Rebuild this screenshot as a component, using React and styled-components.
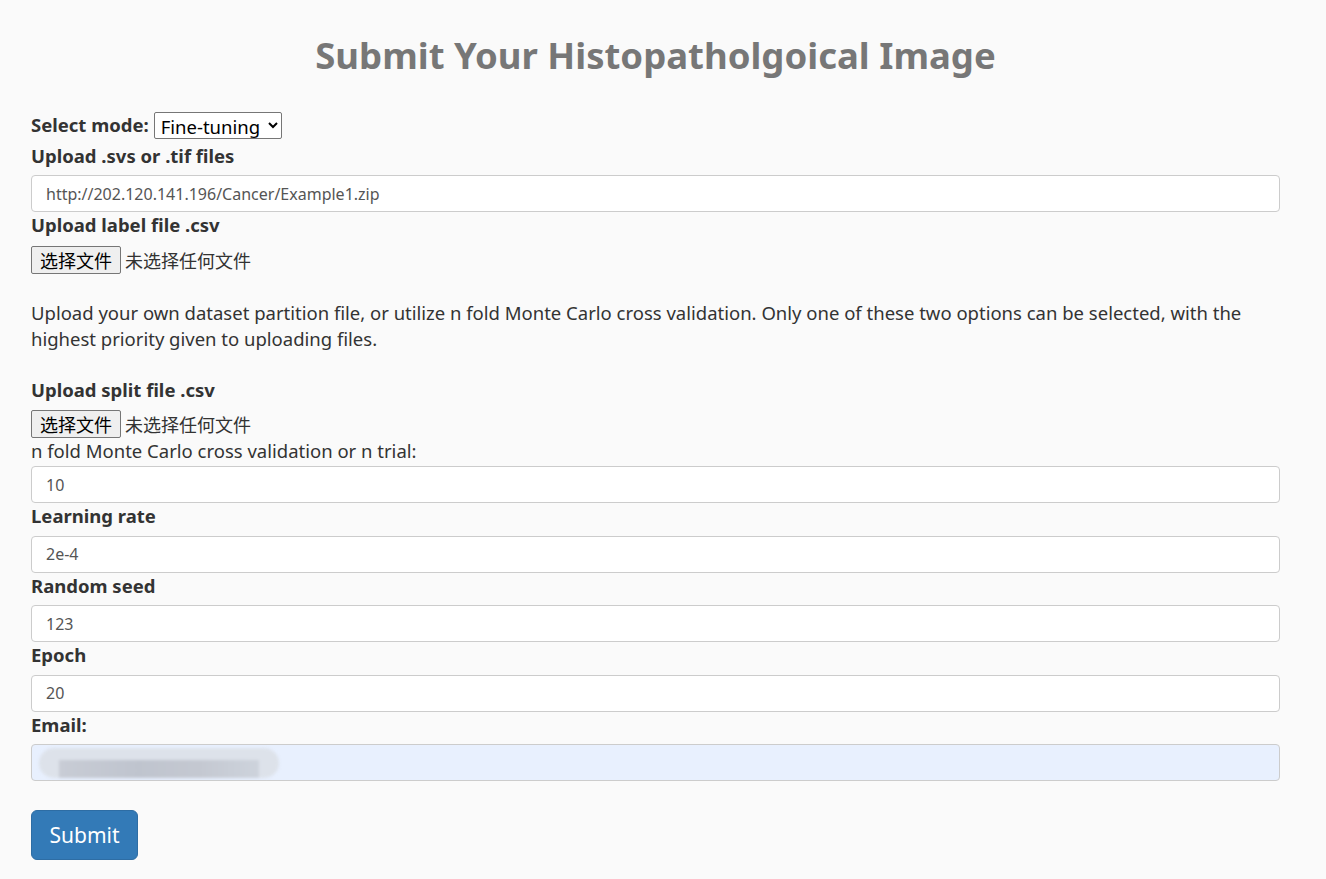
import React from 'react';
import styled, { createGlobalStyle } from 'styled-components';

const GlobalStyle = createGlobalStyle`
  html, body {
    margin: 0;
    padding: 0;
    background: #fafafa;
  }
  body {
    font-family: "Noto Sans", "Noto Sans CJK SC", sans-serif;
    color: #333;
  }
`;

const Page = styled.div`
  padding: 0 46px 20px 31px;
`;

const Title = styled.h1`
  margin: 0;
  padding: 33px 0 34px;
  text-align: center;
  font-size: 36.5px;
  line-height: 44px;
  font-weight: 700;
  color: #777;
`;

const Form = styled.form`
  display: flex;
  flex-direction: column;
`;

const Row = styled.div`
  display: flex;
  align-items: center;
  gap: 5px;
  height: 28px;
`;

const Label = styled.label`
  display: block;
  font-size: 18.5px;
  line-height: 26px;
  font-weight: ${p => (p.plain ? 400 : 700)};
  margin-top: ${p => p.top || 0}px;
  margin-bottom: ${p => p.gap || 0}px;
`;

const Select = styled.select`
  font-family: "Noto Sans", sans-serif;
  font-size: 18.5px;
  height: 27px;
  width: 128px;
  padding: 0 2px;
  border: 1px solid #767676;
  border-radius: 2px;
  background: #fff;
  color: #000;
`;

const Input = styled.input`
  box-sizing: border-box;
  display: block;
  width: 100%;
  height: 37px;
  padding: 0 14px;
  font-family: "Noto Sans", sans-serif;
  font-size: 16px;
  color: #555;
  background: ${p => (p.auto ? '#e8f0fe' : '#fff')};
  border: 1px solid #ccc;
  border-radius: 4px;
  outline: none;
`;

const FileRow = styled.div`
  display: flex;
  align-items: center;
  gap: 4px;
  height: 28px;
`;

const FileButton = styled.button`
  box-sizing: border-box;
  height: 28px;
  width: 90px;
  padding: 0;
  font-family: "Noto Sans CJK SC", sans-serif;
  font-size: 18px;
  color: #000;
  background: #efefef;
  border: 1px solid #767676;
  border-radius: 2px;
`;

const FileText = styled.span`
  font-family: "Noto Sans CJK SC", sans-serif;
  font-size: 18px;
  color: #333;
`;

const Paragraph = styled.p`
  font-size: 18.5px;
  line-height: 26px;
  margin: 26px 0 25px;
`;

const EmailWrap = styled.div`
  position: relative;
`;

const Blur = styled.div`
  position: absolute;
  left: 8px;
  top: 4px;
  width: 240px;
  height: 30px;
  border-radius: 15px;
  background: #dde2ea;
  filter: blur(1.5px);
  overflow: hidden;
  &::after {
    content: '';
    position: absolute;
    left: 20px;
    top: 12px;
    width: 200px;
    height: 20px;
    background: linear-gradient(90deg, #c8ccd5, #bfc4ce 40%, #c4c8d1 70%, #cdd3dc);
  }
`;

const SubmitButton = styled.button`
  align-self: flex-start;
  margin-top: 29px;
  height: 50px;
  width: 107px;
  font-family: "Noto Sans", sans-serif;
  font-size: 21px;
  color: #fff;
  background: #337ab7;
  border: 1px solid #2e6da4;
  border-radius: 6px;
`;

function App() {
  return (
    <Page>
      <GlobalStyle />
      <Title>Submit Your Histopatholgoical Image</Title>
      <Form>
        <Row>
          <Label>Select mode:</Label>
          <Select defaultValue="ft">
            <option value="ft">Fine-tuning</option>
          </Select>
        </Row>
        <Label top={4} gap={6}>Upload .svs or .tif files</Label>
        <Input defaultValue="http://202.120.141.196/Cancer/Example1.zip" />
        <Label gap={8}>Upload label file .csv</Label>
        <FileRow>
          <FileButton type="button">选择文件</FileButton>
          <FileText>未选择任何文件</FileText>
        </FileRow>
        <Paragraph>
          Upload your own dataset partition file, or utilize n fold Monte Carlo cross validation. Only one of these two options can be selected, with the highest priority given to uploading files.
        </Paragraph>
        <Label gap={7}>Upload split file .csv</Label>
        <FileRow>
          <FileButton type="button">选择文件</FileButton>
          <FileText>未选择任何文件</FileText>
        </FileRow>
        <Label plain gap={2}>n fold Monte Carlo cross validation or n trial:</Label>
        <Input defaultValue="10" />
        <Label gap={6.5}>Learning rate</Label>
        <Input defaultValue="2e-4" />
        <Label gap={6.5}>Random seed</Label>
        <Input defaultValue="123" />
        <Label gap={6.5}>Epoch</Label>
        <Input defaultValue="20" />
        <Label gap={6.5}>Email:</Label>
        <EmailWrap>
          <Input auto />
          <Blur />
        </EmailWrap>
        <SubmitButton type="button">Submit</SubmitButton>
      </Form>
    </Page>
  );
}

export default App;
